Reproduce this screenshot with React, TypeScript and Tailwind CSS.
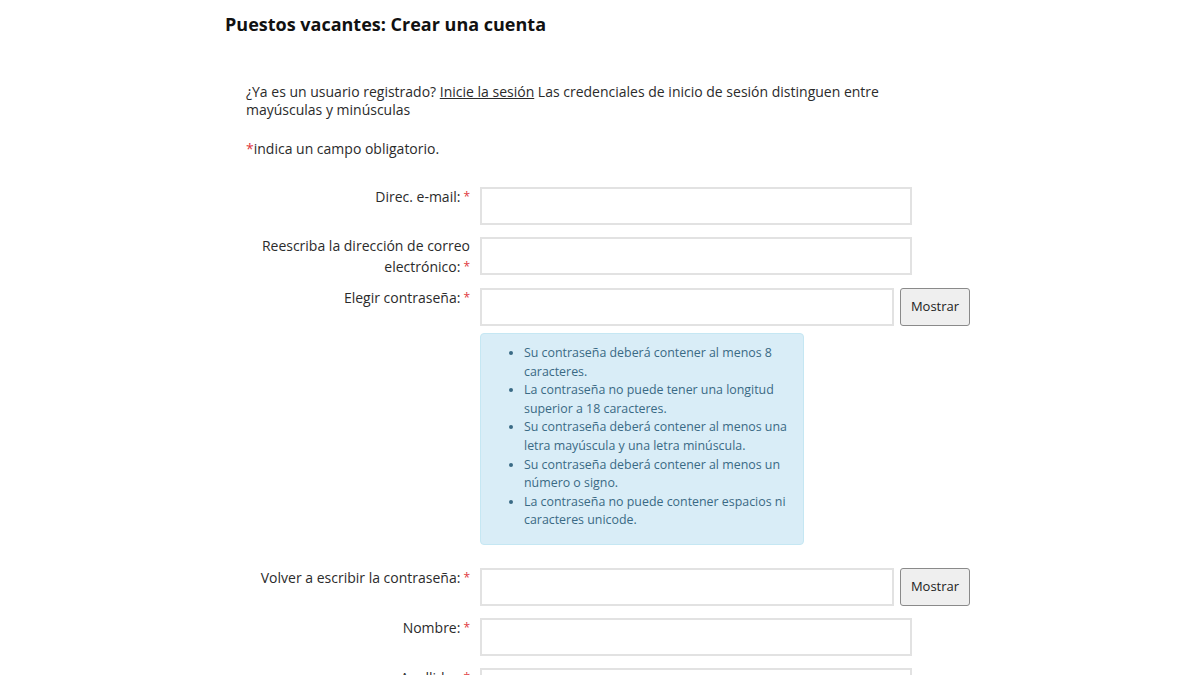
import React from "react";

const font = { fontFamily: '"Open Sans", "Liberation Sans", sans-serif' };

function Req() {
  return <span className="text-[#e0383e] text-[12px] align-top ml-[3px]">*</span>;
}

function Row({
  label,
  mt,
  button,
  labelClass = "-mt-[1px]",
}: {
  label: React.ReactNode;
  mt: string;
  button?: boolean;
  labelClass?: string;
}) {
  return (
    <div className={`flex h-[38px] ${mt}`}>
      <div className={`w-[224px] shrink-0 text-right leading-[21px] text-[14px] text-[#2b2b2b] ${labelClass}`}>
        {label}
      </div>
      <div className="ml-[10px] flex items-start gap-[6px]">
        <div
          className={`h-[38px] border-2 border-[#e2e2e2] bg-white ${
            button ? "w-[414px]" : "w-[432px]"
          }`}
        />
        {button && (
          <div className="h-[38px] w-[70px] rounded-[3px] border border-[#8a8a8a] bg-[#efefef] flex items-center justify-center text-[13px] text-[#222]">
            Mostrar
          </div>
        )}
      </div>
    </div>
  );
}

export default function App() {
  return (
    <div className="min-h-[675px] bg-white overflow-hidden" style={font}>
      <div className="pl-[225px] pt-[10px]">
        <h1 className="text-[18px] font-bold text-[#111] leading-[28px]">
          Puestos vacantes: Crear una cuenta
        </h1>
        <div className="ml-[21px] mt-[45px]">
          <p className="w-[645px] text-[14px] leading-[18px] text-[#2b2b2b]">
            ¿Ya es un usuario registrado?{" "}
            <span className="underline">Inicie la sesión</span> Las credenciales de inicio
            de sesión distinguen entre mayúsculas y minúsculas
          </p>
          <p className="mt-[21px] text-[14px] leading-[18px] text-[#2b2b2b]">
            <span className="text-[#e0383e]">*</span>indica un campo obligatorio.
          </p>

          <div className="mt-[29px]">
            <Row
              mt="mt-0"
              label={
                <>
                  Direc. e-mail:
                  <Req />
                </>
              }
            />
            <Row
              mt="mt-[12px]"
              labelClass="-mt-[2px] pl-[10px]"
              label={
                <>
                  Reescriba la dirección de correo electrónico:
                  <Req />
                </>
              }
            />
            <Row
              mt="mt-[13px]"
              button
              label={
                <>
                  Elegir contraseña:
                  <Req />
                </>
              }
            />
            <div className="ml-[234px] mt-[7px] w-[324px] rounded-[4px] border border-[#c5e7f3] bg-[#d9edf7] pt-[10px] pb-[14px] pl-[43px] pr-[12px]">
              <ul className="list-disc text-[12.4px] leading-[18.6px] text-[#3a6a85]">
                <li>Su contraseña deberá contener al menos 8 caracteres.</li>
                <li>La contraseña no puede tener una longitud superior a 18 caracteres.</li>
                <li>Su contraseña deberá contener al menos una letra mayúscula y una letra minúscula.</li>
                <li>Su contraseña deberá contener al menos un número o signo.</li>
                <li>La contraseña no puede contener espacios ni caracteres unicode.</li>
              </ul>
            </div>
            <Row
              mt="mt-[23px]"
              button
              label={
                <>
                  Volver a escribir la contraseña:
                  <Req />
                </>
              }
            />
            <Row
              mt="mt-[12px]"
              label={
                <>
                  Nombre:
                  <Req />
                </>
              }
            />
            <Row
              mt="mt-[12px]"
              label={
                <>
                  Apellidos:
                  <span className="text-[#e0383e] text-[12px] align-top">*</span>
                </>
              }
            />
          </div>
        </div>
      </div>
    </div>
  );
}
